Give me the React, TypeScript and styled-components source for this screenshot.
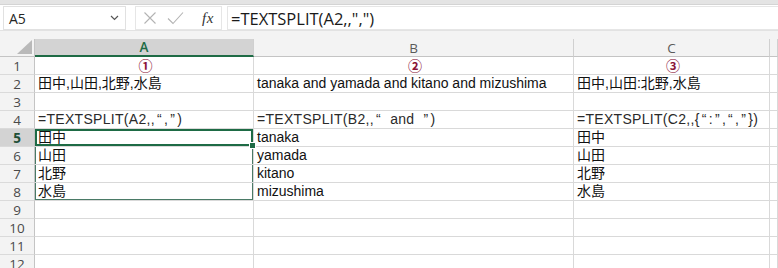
import React from "react";
import styled, { createGlobalStyle } from "styled-components";

const GlobalStyle = createGlobalStyle`
  html, body {
    margin: 0;
    padding: 0;
    background: #ffffff;
    overflow: hidden;
  }
  body {
    font-family: "Open Sans", "Noto Sans", sans-serif;
  }
`;

const UI_FONT = `"Open Sans", "Noto Sans", sans-serif`;
const CELL_FONT = `"Liberation Sans", "Noto Sans CJK JP", sans-serif`;
const GREEN = "#1e6b45";
const GRID = "#d9d9d9";

const Window = styled.div`
  width: 778px;
  height: 268px;
  display: flex;
  flex-direction: column;
  overflow: hidden;
`;

const TopStrip = styled.div`
  height: 4px;
  background: #e4e4e4;
  border-bottom: 1px solid #d4d4d4;
  flex-shrink: 0;
`;

const FormulaBar = styled.div`
  display: flex;
  align-items: stretch;
  height: 24px;
  padding: 1px 0 0 3px;
  gap: 9px;
  background: #ffffff;
  flex-shrink: 0;
`;

const NameBox = styled.div`
  width: 123px;
  box-sizing: border-box;
  border: 1px solid #e1e1e1;
  display: flex;
  align-items: center;
  justify-content: space-between;
  padding: 0 6px 0 5px;
  font-family: ${UI_FONT};
  font-size: 14px;
  color: #262626;
`;

const FormulaButtons = styled.div`
  width: 87px;
  box-sizing: border-box;
  border: 1px solid #e6e6e6;
  display: flex;
  align-items: center;
  padding: 0 0 0 7px;
  gap: 10px;
`;

const Fx = styled.span`
  font-family: "Liberation Serif", serif;
  font-style: italic;
  font-size: 15px;
  color: #333;
  margin-left: 8px;
  letter-spacing: 0.5px;
`;

const FormulaInput = styled.div`
  flex: 1;
  margin-left: -4px;
  box-sizing: border-box;
  border: 1px solid #e6e6e6;
  border-right: none;
  display: flex;
  align-items: center;
  padding-left: 3px;
  font-family: ${UI_FONT};
  font-size: 16.5px;
  color: #1a1a1a;
`;

const SheetGap = styled.div`
  height: 8px;
  background: #f3f3f3;
  border-top: 1px solid #e2e2e2;
  flex-shrink: 0;
`;

const Sheet = styled.div`
  display: grid;
  grid-template-columns: 35px 219px 320px 196px 1fr;
  grid-auto-rows: 18px;
  background: #ffffff;
`;

const Corner = styled.div`
  background: #f3f3f3;
  border-bottom: 1px solid #c4c4c4;
  border-right: 1px solid #c4c4c4;
  box-sizing: border-box;
  display: flex;
  align-items: flex-end;
  justify-content: flex-end;
  padding: 0 2px 2px 0;
`;

const ColHeader = styled.div<{ $selected?: boolean }>`
  box-sizing: border-box;
  background: ${(p) => (p.$selected ? "#d3d3d3" : "#f3f3f3")};
  border-right: 1px solid #d0d0d0;
  border-bottom: ${(p) => (p.$selected ? `2px solid ${GREEN}` : "1px solid #c4c4c4")};
  display: flex;
  align-items: center;
  justify-content: center;
  font-family: ${UI_FONT};
  font-size: 13.5px;
  font-weight: ${(p) => (p.$selected ? 600 : 400)};
  color: ${(p) => (p.$selected ? GREEN : "#5a5a5a")};
`;

const RowHeader = styled.div<{ $selected?: boolean }>`
  box-sizing: border-box;
  background: ${(p) => (p.$selected ? "#d3d3d3" : "#f3f3f3")};
  border-right: 1px solid #c4c4c4;
  border-bottom: 1px solid #dadada;
  display: flex;
  align-items: center;
  justify-content: center;
  font-family: ${UI_FONT};
  font-size: 13.5px;
  font-weight: ${(p) => (p.$selected ? 700 : 400)};
  color: ${(p) => (p.$selected ? "#1f4f36" : "#4a4a4a")};
`;

type Outline = "active" | "mid" | "last" | undefined;

const outlineShadow = (o: Outline) => {
  if (o === "active") return `inset 0 0 0 2px ${GREEN}`;
  if (o === "mid") return `inset 1px 0 0 #4a7a66, inset -1px 0 0 #4a7a66`;
  if (o === "last")
    return `inset 1px 0 0 #4a7a66, inset -1px 0 0 #4a7a66, inset 0 -1px 0 #4a7a66`;
  return "none";
};

const Cell = styled.div<{ $align?: "left" | "center"; $outline?: Outline }>`
  position: relative;
  box-sizing: border-box;
  border-right: 1px solid ${GRID};
  border-bottom: 1px solid ${GRID};
  box-shadow: ${(p) => outlineShadow(p.$outline)};
  display: flex;
  align-items: flex-end;
  justify-content: ${(p) => (p.$align === "center" ? "center" : "flex-start")};
  padding: 0 0 1px 3px;
  font-family: ${CELL_FONT};
  font-size: 14px;
  line-height: 16px;
  color: #111;
  white-space: nowrap;
  overflow: visible;

  ${(p) =>
    p.$outline === "active" &&
    `
    &::after {
      content: "";
      position: absolute;
      right: -3px;
      bottom: -3px;
      width: 5px;
      height: 5px;
      background: ${GREEN};
      border: 1px solid #fff;
      z-index: 2;
    }
  `}
`;

const Circled = styled.span`
  color: #8a1538;
  font-family: "Noto Sans CJK JP", sans-serif;
  font-size: 14px;
  font-weight: 700;
  line-height: 16px;
`;

const Formula = styled.span`
  color: #2a2a2a;
  letter-spacing: 0.3px;
  word-spacing: 3px;
`;

const Quote = styled.span`
  display: inline-block;
  width: 9px;
  text-align: center;
`;

const CrossIcon = () => (
  <svg width="14" height="14" viewBox="0 0 14 14">
    <path d="M1.5 1.5 L12.5 12.5 M12.5 1.5 L1.5 12.5" stroke="#b3b3b3" strokeWidth="1.1" fill="none" />
  </svg>
);

const CheckIcon = () => (
  <svg width="17" height="14" viewBox="0 0 17 14">
    <path d="M1 7.5 L6 12.5 L16 1.5" stroke="#b3b3b3" strokeWidth="1.1" fill="none" />
  </svg>
);

const Chevron = () => (
  <svg width="9" height="6" viewBox="0 0 9 6">
    <path d="M1 1 L4.5 4.5 L8 1" stroke="#555" strokeWidth="1.2" fill="none" />
  </svg>
);

const CornerTriangle = () => (
  <svg width="15" height="14" viewBox="0 0 15 14">
    <polygon points="15,0 15,14 0,14" fill="#b9b9b9" />
  </svg>
);

const L = () => <Quote>“</Quote>;
const R = () => <Quote>”</Quote>;

type CellData = { text?: React.ReactNode; align?: "left" | "center"; outline?: Outline };

const rows: CellData[][] = [
  [
    { text: <Circled>①</Circled>, align: "center" },
    { text: <Circled>②</Circled>, align: "center" },
    { text: <Circled>③</Circled>, align: "center" },
  ],
  [
    { text: "田中,山田,北野,水島" },
    { text: "tanaka and yamada and kitano and mizushima" },
    { text: "田中,山田:北野,水島" },
  ],
  [{}, {}, {}],
  [
    {
      text: (
        <Formula>
          =TEXTSPLIT(A2,,<L />,<R />)
        </Formula>
      ),
    },
    {
      text: (
        <Formula>
          =TEXTSPLIT(B2,,<L /> and <R />)
        </Formula>
      ),
    },
    {
      text: (
        <Formula>
          =TEXTSPLIT(C2,,{"{"}
          <L />:<R />,<L />,<R />
          {"}"})
        </Formula>
      ),
    },
  ],
  [{ text: "田中", outline: "active" }, { text: "tanaka" }, { text: "田中" }],
  [{ text: "山田", outline: "mid" }, { text: "yamada" }, { text: "山田" }],
  [{ text: "北野", outline: "mid" }, { text: "kitano" }, { text: "北野" }],
  [{ text: "水島", outline: "last" }, { text: "mizushima" }, { text: "水島" }],
  [{}, {}, {}],
  [{}, {}, {}],
  [{}, {}, {}],
  [{}, {}, {}],
];

export default function App() {
  return (
    <>
      <GlobalStyle />
      <Window>
        <TopStrip />
        <FormulaBar>
          <NameBox>
            <span>A5</span>
            <Chevron />
          </NameBox>
          <FormulaButtons>
            <CrossIcon />
            <CheckIcon />
            <Fx>fx</Fx>
          </FormulaButtons>
          <FormulaInput>=TEXTSPLIT(A2,,",")</FormulaInput>
        </FormulaBar>
        <SheetGap />
        <Sheet>
          <Corner>
            <CornerTriangle />
          </Corner>
          <ColHeader $selected>A</ColHeader>
          <ColHeader>B</ColHeader>
          <ColHeader>C</ColHeader>
          <ColHeader />
          {rows.map((row, i) => (
            <React.Fragment key={i}>
              <RowHeader $selected={i === 4}>{i + 1}</RowHeader>
              {row.map((c, j) => (
                <Cell key={j} $align={c.align} $outline={c.outline}>
                  {c.text}
                </Cell>
              ))}
              <Cell />
            </React.Fragment>
          ))}
        </Sheet>
      </Window>
    </>
  );
}
